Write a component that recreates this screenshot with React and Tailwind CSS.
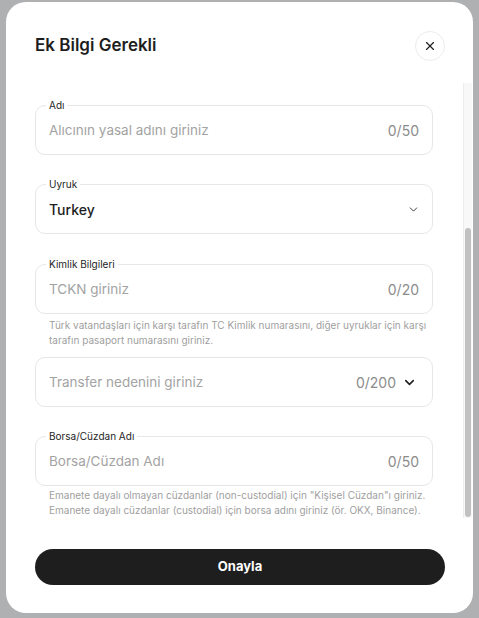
import { X, ChevronDown } from 'lucide-react'

const font = { fontFamily: 'Inter, "Noto Sans", sans-serif' }

function Field({ label, placeholder, count, value, chevron, thickChevron }) {
    return (
        <div className="relative h-[50px] rounded-[10px] border border-[#e7e7e7] flex items-center pl-[13px] pr-[13px]">
            {label && (
                <span className="absolute -top-[7px] left-[10px] px-[3px] bg-white text-[10px] leading-[12px] text-[#1e1e1e]">
                    {label}
                </span>
            )}
            {value
                ? <span className="text-[14px] font-medium text-[#1e1e1e]">{value}</span>
                : <span className="text-[13.5px] text-[#a3a3a3]">{placeholder}</span>}
            <div className="ml-auto flex items-center gap-[6px]">
                {count && <span className="text-[14px] text-[#8c8c8c]">{count}</span>}
                {chevron && <ChevronDown size={13} strokeWidth={1.6} className="text-[#1e1e1e] -mr-[1px]" />}
                {thickChevron && <ChevronDown size={15} strokeWidth={2.5} className="text-[#1e1e1e] mr-[2px]" />}
            </div>
        </div>
    )
}

function Helper({ children }) {
    return <p className="pl-[14px] pr-[4px] text-[10px] leading-[15px] text-[#a0a0a0]">{children}</p>
}

export default function App() {
    return (
        <div className="min-h-screen bg-[#afb0b2] pt-[2px] pl-[6px]" style={font}>
            <div className="w-[467px] h-[611px] bg-white rounded-[20px] flex flex-col">
                <div className="flex items-center justify-between pt-[29px] pl-[29px] pr-[28px] mb-[22px]">
                    <h2 className="text-[17px] font-semibold text-[#1e1e1e]">Ek Bilgi Gerekli</h2>
                    <button className="w-[30px] h-[30px] rounded-full border border-[#ececec] flex items-center justify-center">
                        <X size={14} strokeWidth={2} className="text-[#1e1e1e]" />
                    </button>
                </div>

                <div className="h-[435px] flex">
                    <div className="w-[398px] ml-[29px] pt-[22px]">
                        <Field label="Adı" placeholder="Alıcının yasal adını giriniz" count="0/50" />
                        <div className="mt-[29px]">
                            <Field label="Uyruk" value="Turkey" chevron />
                        </div>
                        <div className="mt-[30px]">
                            <Field label="Kimlik Bilgileri" placeholder="TCKN giriniz" count="0/20" />
                            <div className="mt-[4px]">
                                <Helper>Türk vatandaşları için karşı tarafın TC Kimlik numarasını, diğer uyruklar için karşı tarafın pasaport numarasını giriniz.</Helper>
                            </div>
                        </div>
                        <div className="mt-[9px]">
                            <Field placeholder="Transfer nedenini giriniz" count="0/200" thickChevron />
                        </div>
                        <div className="mt-[29px]">
                            <Field label="Borsa/Cüzdan Adı" placeholder="Borsa/Cüzdan Adı" count="0/50" />
                            <div className="mt-[2px]">
                                <Helper>Emanete dayalı olmayan cüzdanlar (non-custodial) için "Kişisel Cüzdan"ı giriniz. Emanete dayalı cüzdanlar (custodial) için borsa adını giriniz (ör. OKX, Binance).</Helper>
                            </div>
                        </div>
                    </div>
                    <div className="ml-auto mr-[1px] w-[9px] bg-[#f8f8f8] border-l border-[#ececec]">
                        <div className="mt-[145px] h-[289px] mx-[1px] rounded-full bg-[#c1c1c1]" />
                    </div>
                </div>

                <div className="pt-[31px] pl-[29px] pr-[28px]">
                    <button className="w-full h-[36px] rounded-full bg-[#1e1e1e] text-white text-[13px] font-bold">
                        Onayla
                    </button>
                </div>
            </div>
        </div>
    )
}
